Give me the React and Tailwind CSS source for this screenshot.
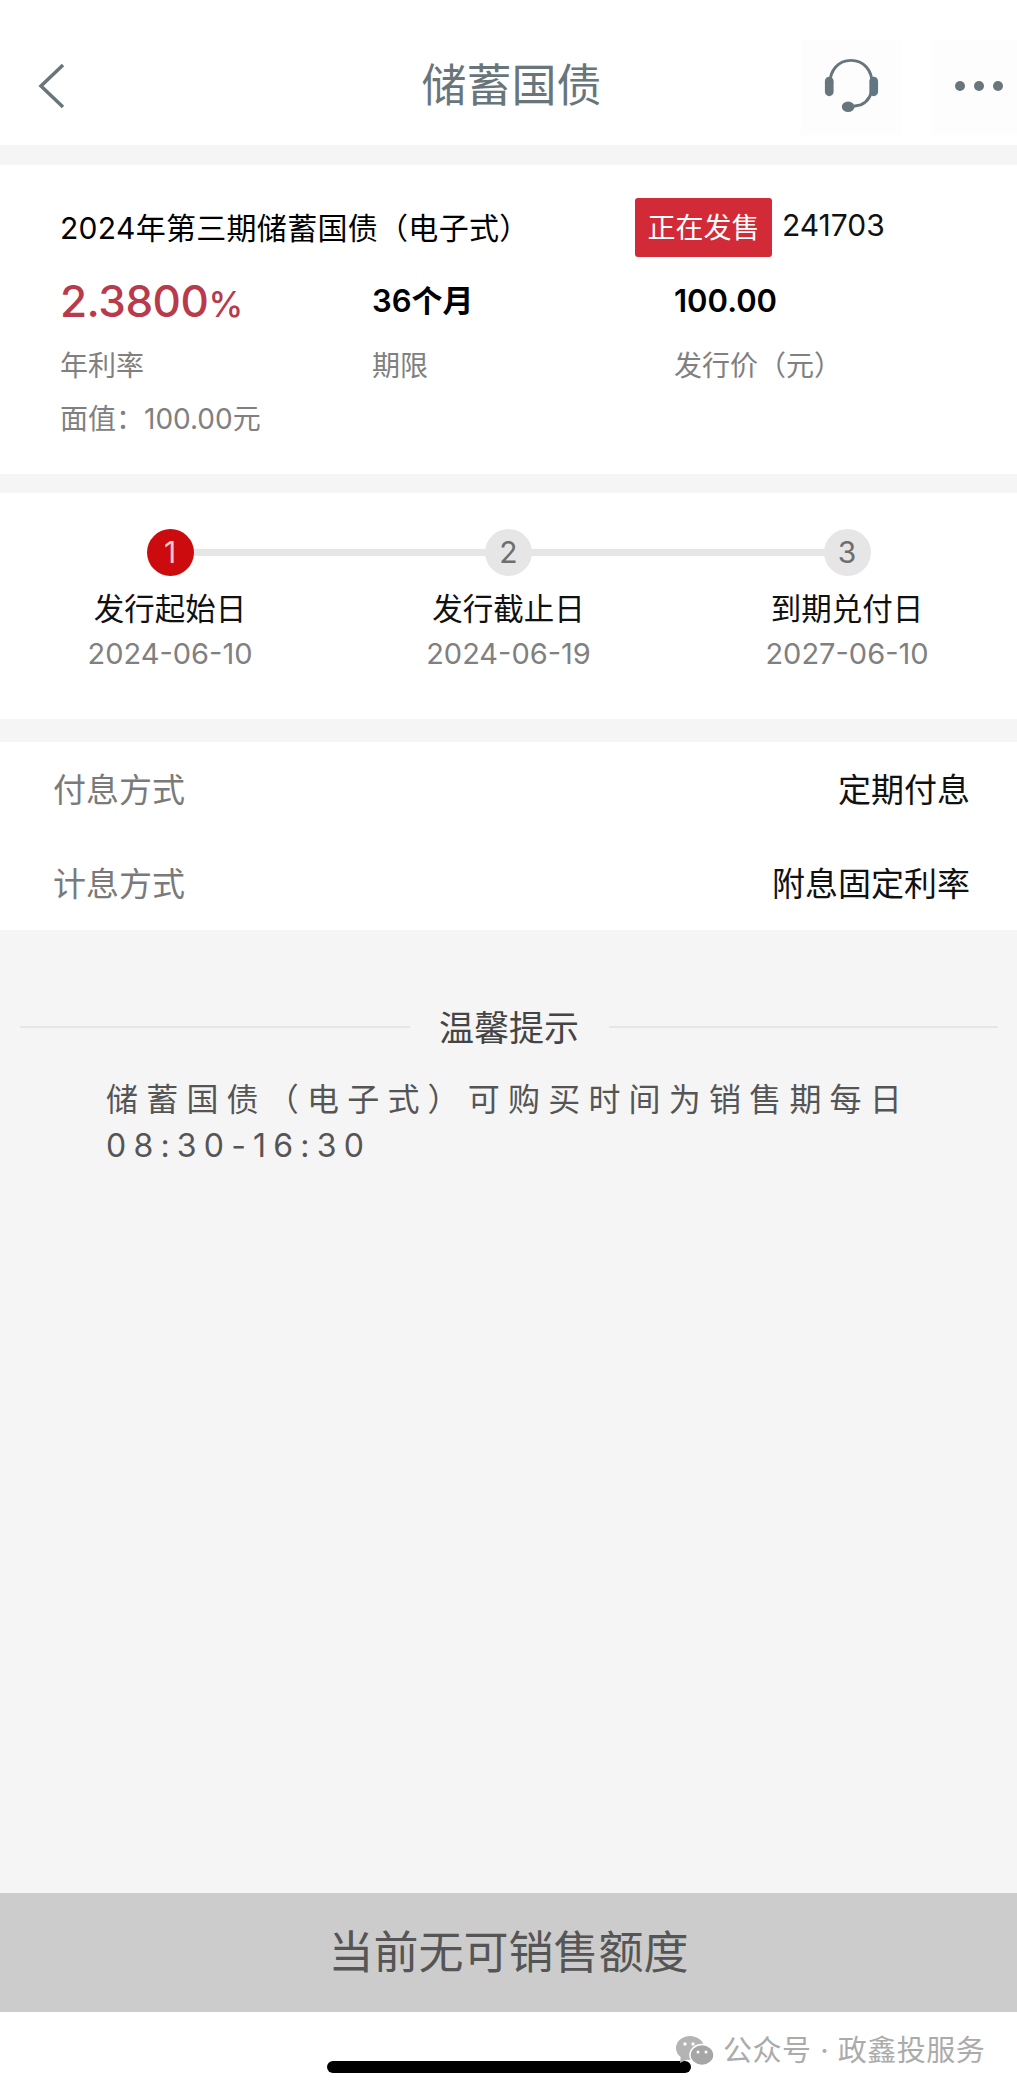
import React from 'react';

const FONT = '[font-family:Inter,"Noto_Sans_CJK_SC",sans-serif]';

const pasos = [
  { n: 1, nombre: '发行起始日', fecha: '2024-06-10', activo: true },
  { n: 2, nombre: '发行截止日', fecha: '2024-06-19' },
  { n: 3, nombre: '到期兑付日', fecha: '2027-06-10' },
];

const Headset = () => (
  <svg width="58" height="57" viewBox="0 0 60 58" fill="none">
    <path d="M8 28C8 13 17 3 30 3s22 10 22 25c0 11-5 18-12 21l-10 2" stroke="#68767c" strokeWidth="3" />
    <rect x="3" y="20" width="9" height="20" rx="4.5" fill="#68767c" />
    <rect x="49" y="20" width="9" height="20" rx="4.5" fill="#5f7684" />
    <ellipse cx="27" cy="51" rx="6.5" ry="5.5" fill="#68767c" />
  </svg>
);

const WeChat = () => (
  <svg width="40" height="32" viewBox="0 0 40 32">
    <ellipse cx="15" cy="13" rx="14" ry="12" fill="#b4b4b4" />
    <path d="M6 20l-1 8 8-4z" fill="#b4b4b4" />
    <ellipse cx="27" cy="20" rx="12" ry="10.5" fill="#a6a6a6" stroke="#fff" strokeWidth="1.5" />
    <circle cx="10" cy="9" r="1.7" fill="#fff" />
    <circle cx="18" cy="9" r="1.7" fill="#fff" />
    <circle cx="23" cy="17" r="1.5" fill="#fff" />
    <circle cx="31" cy="17" r="1.5" fill="#fff" />
  </svg>
);

export default function App() {
  return (
    <div className={`flex flex-col h-[2092px] w-[1017px] bg-[#f5f5f5] overflow-hidden ${FONT}`}>
      {/* Header */}
      <div className="relative h-[145px] bg-white flex items-center justify-center pt-[26px] pl-[6px] shrink-0">
        <svg className="absolute left-[38px] top-[63px]" width="28" height="46" viewBox="0 0 28 46" fill="none">
          <path d="M25 2L3 23l22 21" stroke="#68767c" strokeWidth="3.5" />
        </svg>
        <h1 className="text-[45px] leading-[60px] text-[#68767c] font-normal">储蓄国债</h1>
        <div className="absolute left-[801px] top-[40px] w-[100px] h-[95px] bg-[#fdfdfd] flex items-center justify-center pb-[4px]">
          <Headset />
        </div>
        <div className="absolute left-[932px] top-[40px] w-[85px] h-[95px] bg-[#fdfdfd] flex items-center justify-end gap-[9px] pr-[14px] pb-[4px]">
          <span className="w-[10px] h-[10px] rounded-full bg-[#68767c]"></span>
          <span className="w-[10px] h-[10px] rounded-full bg-[#68767c]"></span>
          <span className="w-[10px] h-[10px] rounded-full bg-[#68767c]"></span>
        </div>
      </div>

      {/* Datos del bono */}
      <div className="mt-[20px] h-[309px] bg-white pl-[60px] pt-[33px] shrink-0">
        <div className="flex items-start">
          <div className="w-[575px] mt-[11px] text-[30px] leading-[38px] text-black tracking-[0.3px]">2024年第三期储蓄国债（电子式）</div>
          <div className="w-[137px] h-[59px] rounded-[3px] bg-[#d22a36] text-white text-[28px] flex items-center justify-center">正在发售</div>
          <div className="ml-[10px] mt-[8px] text-[30px] leading-[38px] text-[#111]">241703</div>
        </div>
        <div className="flex items-center h-[56px] mt-[16px]">
          <div className="w-[312px] text-[#b93a4a] text-[44px] leading-[56px] font-medium -tracking-[0.5px] pt-[2px]">2.3800<span className="text-[35px]">%</span></div>
          <div className="w-[302px] text-[31px] leading-[56px] font-semibold text-black">36个月</div>
          <div className="text-[31px] leading-[56px] font-semibold text-black">100.00</div>
        </div>
        <div className="flex mt-[18px] text-[28px] leading-[38px] text-[#808080]">
          <div className="w-[312px]">年利率</div>
          <div className="w-[302px]">期限</div>
          <div>发行价（元）</div>
        </div>
        <div className="mt-[15px] text-[28px] leading-[38px] text-[#808080]">面值：100.00元</div>
      </div>

      {/* Pasos */}
      <div className="relative mt-[19px] h-[226px] bg-white pt-[36px] flex justify-between px-[60px] shrink-0">
        <div className="absolute left-[170px] right-[170px] top-[56px] h-[7px] bg-[#e6e6e6]"></div>
        {pasos.map((paso) => (
          <div key={paso.n} className="relative w-[220px] flex flex-col items-center">
            <div className={`w-[47px] h-[47px] rounded-full flex items-center justify-center text-[30px] ${paso.activo ? 'bg-[#cc0b0f] text-[#f4c9c9]' : 'bg-[#e6e6e6] text-[#6e6e6e]'}`}>{paso.n}</div>
            <div className="mt-[13px] text-[30.5px] leading-[40px] text-[#111]">{paso.nombre}</div>
            <div className="mt-[5px] text-[29px] leading-[40px] text-[#808080]">{paso.fecha}</div>
          </div>
        ))}
      </div>

      {/* Pago de intereses */}
      <div className="mt-[23px] h-[188px] bg-white pl-[53px] pr-[47px] pt-[2px] text-[33px] shrink-0">
        <div className="flex justify-between items-center h-[94px]">
          <span className="text-[#7a7a7a]">付息方式</span>
          <span className="text-[#111]">定期付息</span>
        </div>
        <div className="flex justify-between items-center h-[94px]">
          <span className="text-[#7a7a7a]">计息方式</span>
          <span className="text-[#111]">附息固定利率</span>
        </div>
      </div>

      {/* Aviso */}
      <div className="flex-1 pt-[73px]">
        <div className="flex items-center pl-[20px] pr-[19px]">
          <div className="flex-1 h-[2px] mb-[2px] bg-[#e6e6e6]"></div>
          <div className="w-[199px] text-center text-[35px] leading-[50px] text-[#444]">温馨提示</div>
          <div className="flex-1 h-[2px] mb-[2px] bg-[#e6e6e6]"></div>
        </div>
        <p className="mt-[24px] ml-[106px] w-[810px] text-[32px] leading-[46px] tracking-[8.2px] text-[#555]">
          储蓄国债（电子式）可购买时间为销售期每日<span className="tracking-[7.2px]">08:30-16:30</span>
        </p>
      </div>

      {/* Boton */}
      <div className="h-[119px] bg-[#cccccc] flex items-center justify-center text-[45px] text-[#555] shrink-0">当前无可销售额度</div>

      {/* Pie */}
      <div className="relative h-[80px] bg-white flex justify-center shrink-0">
        <div className="mt-[49px] w-[364px] h-[12px] rounded-full bg-black"></div>
        <div className="absolute left-[675px] top-[21px] flex items-center gap-[8px] text-[29px] leading-[36px] tracking-[0.5px] text-[#ababab]">
          <WeChat />
          <span>公众号 · 政鑫投服务</span>
        </div>
      </div>
    </div>
  );
}
